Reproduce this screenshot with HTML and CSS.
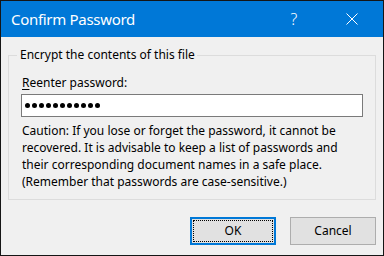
FILE: index.html
```html
<!DOCTYPE html>
<html>
<head>
<meta charset="utf-8">
<link rel="stylesheet" href="styles.css">
</head>
<body>
<div class="window">
  <div class="titlebar">
    <span class="title">Confirm Password</span>
    <span class="help">?</span>
    <span class="close">
      <svg width="12" height="12" viewBox="0 0 12 12"><path d="M0.5 0.5 L11.5 11.5 M11.5 0.5 L0.5 11.5" stroke="#fff" stroke-width="1" fill="none"/></svg>
    </span>
  </div>
  <div class="content">
    <fieldset class="group">
      <legend class="legend">Encrypt the contents of this file</legend>
      <div class="inner">
        <div class="label"><u>R</u>eenter password:</div>
        <div class="input">
          <span class="dot"></span><span class="dot"></span><span class="dot"></span><span class="dot"></span><span class="dot"></span><span class="dot"></span><span class="dot"></span><span class="dot"></span><span class="dot"></span><span class="dot"></span><span class="dot"></span>
        </div>
        <p class="caution">Caution: If you lose or forget the password, it cannot be<br>recovered. It is advisable to keep a list of passwords and<br>their corresponding document names in a safe place.<br>(Remember that passwords are case-sensitive.)</p>
      </div>
    </fieldset>
    <div class="buttons">
      <div class="btn btn-default"><span class="focus">OK</span></div>
      <div class="btn">Cancel</div>
    </div>
  </div>
</div>
</body>
</html>
```
FILE: styles.css
```css
html, body {
  margin: 0;
  padding: 0;
  background: #f0f0f0;
}
.window {
  width: 384px;
  height: 256px;
  box-sizing: border-box;
  border: 1px solid #151515;
  background: #f0f0f0;
  font-family: "Noto Sans", "Open Sans", sans-serif;
  font-size: 12px;
  color: #000;
  display: flex;
  flex-direction: column;
}
.titlebar {
  height: 36px;
  background: #0078d7;
  color: #fff;
  display: flex;
  align-items: center;
}
.title {
  margin-left: 10px;
  font-size: 15px;
  line-height: 20px;
  letter-spacing: -0.3px;
  flex: 1;
}
.help {
  font-size: 16px;
  line-height: 20px;
  width: 12px;
  text-align: center;
  margin-right: 46px;
  font-weight: 300;
}
.close {
  width: 12px;
  height: 12px;
  margin-right: 25px;
  display: flex;
}
.content {
  flex: 1;
  padding: 0 7px;
}
.group {
  margin: 10px 0 0 0;
  padding: 0 12px 9px 13px;
  border: 1px solid #dcdcdc;
  min-width: 0;
}
.legend {
  margin-left: -5px;
  padding: 0 2px 0 3px;
  line-height: 16px;
}
.inner {
  padding-top: 12px;
}
.label {
  line-height: 16px;
}
.label u {
  text-decoration-thickness: 1px;
  text-underline-offset: 2px;
}
.input {
  margin-top: 3px;
  margin-left: -1px;
  height: 23px;
  box-sizing: border-box;
  border: 1px solid #7a7a7a;
  background: #fff;
  display: flex;
  align-items: center;
  gap: 2px;
  padding-left: 3px;
}
.dot {
  width: 5px;
  height: 5px;
  border-radius: 50%;
  background: #000;
}
.caution {
  margin: 5px 0 0 0;
  line-height: 17px;
  white-space: nowrap;
}
.buttons {
  display: flex;
  justify-content: flex-end;
  gap: 14px;
  margin-top: 17px;
}
.btn {
  width: 86px;
  height: 28px;
  box-sizing: border-box;
  border: 1px solid #adadad;
  background: #e1e1e1;
  display: flex;
  align-items: center;
  justify-content: center;
  line-height: 16px;
}
.btn-default {
  border: 2px solid #0078d7;
  padding: 1px;
}
.focus {
  flex: 1;
  align-self: stretch;
  border: 1px dotted #000;
  display: flex;
  align-items: center;
  justify-content: center;
}
```
